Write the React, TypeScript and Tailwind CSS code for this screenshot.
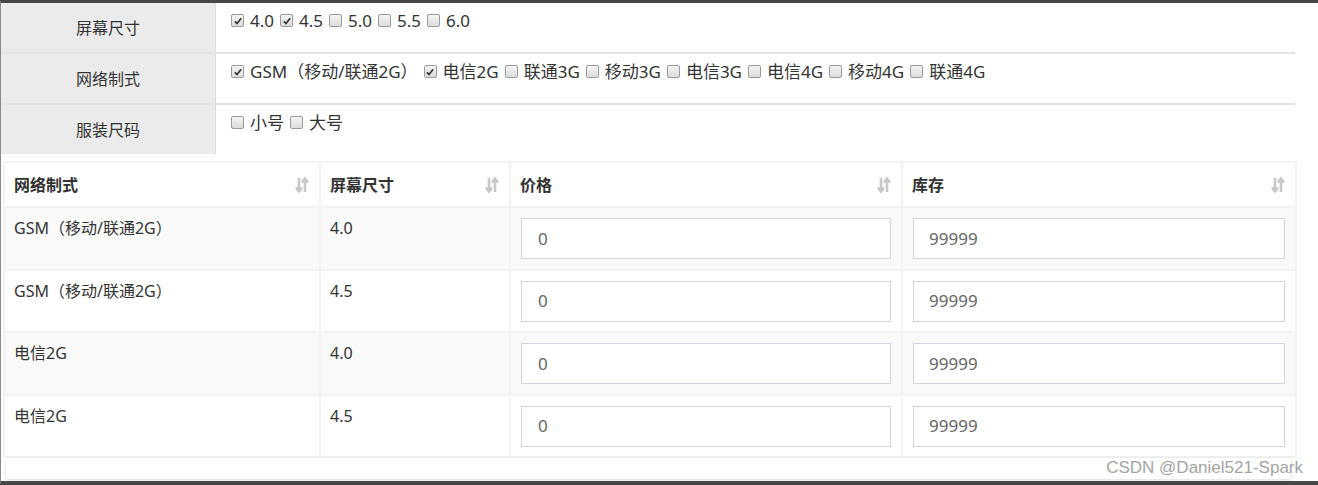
import React from 'react'

const font = { fontFamily: '"Noto Sans", "Noto Sans CJK SC", sans-serif' }

function Box({ checked }: { checked?: boolean }) {
  return (
    <span className="inline-flex h-[13px] w-[13px] shrink-0 items-center justify-center rounded-[2px] border border-[#9a9a9a] bg-gradient-to-b from-[#f4f4f4] to-[#dcdcdc]">
      {checked && (
        <svg viewBox="0 0 12 12" className="h-[10px] w-[10px]">
          <path d="M2.2 6.4 L4.8 9 L9.8 2.8" fill="none" stroke="#333" strokeWidth="2" />
        </svg>
      )}
    </span>
  )
}

function Options({ items }: { items: [string, boolean][] }) {
  return (
    <div className="flex items-center gap-[6px] self-start pl-[15px] pt-[5px] text-[17px] text-[#333]">
      {items.map(([label, on]) => (
        <label key={label} className="flex items-center gap-[6px]">
          <Box checked={on} />
          <span className="whitespace-nowrap">{label}</span>
        </label>
      ))}
    </div>
  )
}

function SortIcon() {
  return (
    <svg viewBox="0 0 14 16" className="h-[16px] w-[14px]">
      <path d="M4 1 V14 M1 10.5 L4 14.5 L7 10.5" fill="none" stroke="#c8c8c8" strokeWidth="2.6" />
      <path d="M10 15 V2 M7 5.5 L10 1.5 L13 5.5" fill="none" stroke="#c8c8c8" strokeWidth="2.6" />
    </svg>
  )
}

const rows = [
  { net: 'GSM（移动/联通2G）', size: '4.0', h: 'h-[63px]' },
  { net: 'GSM（移动/联通2G）', size: '4.5', h: 'h-[62px]' },
  { net: '电信2G', size: '4.0', h: 'h-[63px]' },
  { net: '电信2G', size: '4.5', h: 'h-[62px]' },
]

export default function App() {
  const form: [string, [string, boolean][]][] = [
    ['屏幕尺寸', [['4.0', true], ['4.5', true], ['5.0', false], ['5.5', false], ['6.0', false]]],
    [
      '网络制式',
      [
        ['GSM（移动/联通2G）', true],
        ['电信2G', true],
        ['联通3G', false],
        ['移动3G', false],
        ['电信3G', false],
        ['电信4G', false],
        ['移动4G', false],
        ['联通4G', false],
      ],
    ],
    ['服装尺码', [['小号', false], ['大号', false]]],
  ]

  return (
    <div
      style={font}
      className="relative h-[485px] w-[1318px] overflow-hidden border-t-[3px] border-b-4 border-l border-[#474747] border-l-[#8a8a8a] bg-white"
    >
      {/* form rows */}
      <div className="w-[1294px]">
        {form.map(([label, items], i) => (
          <div
            key={label}
            className={`flex ${i < 2 ? 'h-[51px] border-b-2 border-[#e3e3e3]' : 'h-[49px]'}`}
          >
            <div className="flex w-[215px] items-center justify-center border-r border-[#dcdcdc] bg-[#ebebeb] text-[16px] text-[#333]">
              {label}
            </div>
            <Options items={items} />
          </div>
        ))}
      </div>

      {/* sku table */}
      <table className="ml-[2px] mt-[7px] w-[1292px] table-fixed border-collapse text-[16px] text-[#333]">
        <colgroup>
          <col className="w-[316px]" />
          <col className="w-[190px]" />
          <col className="w-[392px]" />
          <col className="w-[394px]" />
        </colgroup>
        <thead>
          <tr className="h-[45px]">
            {['网络制式', '屏幕尺寸', '价格', '库存'].map((h) => (
              <th key={h} className="border-2 border-[#f2f2f2] pl-[9px] pr-[10px] text-left font-bold">
                <div className="flex items-center justify-between">
                  <span>{h}</span>
                  <SortIcon />
                </div>
              </th>
            ))}
          </tr>
        </thead>
        <tbody>
          {rows.map((r, i) => (
            <tr key={i} className={`${r.h} ${i % 2 === 0 ? 'bg-[#f9f9f9]' : 'bg-white'}`}>
              <td className="border-2 border-[#f2f2f2] pl-[9px] pr-[10px] pt-[8px] align-top">{r.net}</td>
              <td className="border-2 border-[#f2f2f2] pl-[9px] pr-[10px] pt-[8px] align-top">{r.size}</td>
              <td className="border-2 border-[#f2f2f2] px-[10px] align-middle">
                <div className="flex h-[41px] items-center border border-[#d2d4de] bg-white pl-[16px] text-[17px] text-[#666]">
                  0
                </div>
              </td>
              <td className="border-2 border-[#f2f2f2] px-[10px] align-middle">
                <div className="flex h-[41px] items-center border border-[#d2d4de] bg-white pl-[15px] text-[17px] text-[#666]">
                  99999
                </div>
              </td>
            </tr>
          ))}
        </tbody>
      </table>

      {/* footer strip */}
      <div className="ml-[5px] h-[21px] w-[1285px] bg-white shadow-[0_1px_3px_rgba(0,0,0,0.15)]" />

      <div
        className="absolute right-[15px] top-[452px] text-[17px] text-[#a3a3a3]"
        style={{ fontFamily: '"Liberation Sans", Arial, sans-serif' }}
      >
        CSDN @Daniel521-Spark
      </div>
    </div>
  )
}
